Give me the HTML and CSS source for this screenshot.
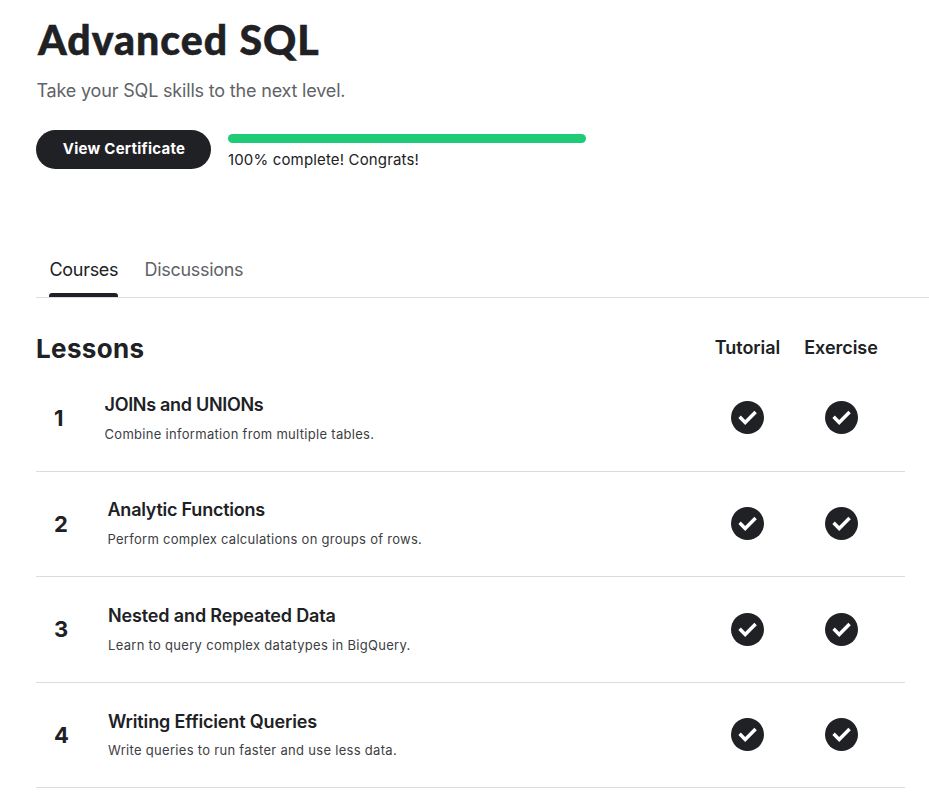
FILE: index.html
```html
<!DOCTYPE html>
<html lang="en">
<head>
<meta charset="utf-8">
<title>Advanced SQL</title>
<link rel="stylesheet" href="styles.css">
</head>
<body>
<svg class="defs" aria-hidden="true"><symbol id="check" viewBox="2 2 20 20"><circle cx="12" cy="12" r="10"/><path d="M7.200 11.600l3.400 3.400 6.300-6.300" fill="none" stroke="#fff" stroke-width="2.100"/></symbol></svg>
<header class="intro">
  <h1>Advanced SQL</h1>
  <p class="tagline">Take your SQL skills to the next level.</p>
  <div class="status">
    <button class="certificate" type="button">View Certificate</button>
    <div class="progress"><div class="bar"></div><p>100% complete! Congrats!</p></div>
  </div>
</header>
<nav class="tabs"><a class="tab active">Courses</a><a class="tab">Discussions</a></nav>
<main class="lessons">
  <div class="heading"><h2>Lessons</h2><span class="col">Tutorial</span><span class="col">Exercise</span></div>
  <div class="lesson first"><span class="number">1</span><div class="text"><h3>JOINs and UNIONs</h3><p>Combine information from multiple tables.</p></div><span class="mark"><svg><use href="#check"/></svg></span><span class="mark"><svg><use href="#check"/></svg></span></div>
  <div class="lesson second"><span class="number">2</span><div class="text"><h3>Analytic Functions</h3><p>Perform complex calculations on groups of rows.</p></div><span class="mark"><svg><use href="#check"/></svg></span><span class="mark"><svg><use href="#check"/></svg></span></div>
  <div class="lesson third"><span class="number">3</span><div class="text"><h3>Nested and Repeated Data</h3><p>Learn to query complex datatypes in BigQuery.</p></div><span class="mark"><svg><use href="#check"/></svg></span><span class="mark"><svg><use href="#check"/></svg></span></div>
  <div class="lesson fourth"><span class="number">4</span><div class="text"><h3>Writing Efficient Queries</h3><p>Write queries to run faster and use less data.</p></div><span class="mark"><svg><use href="#check"/></svg></span><span class="mark"><svg><use href="#check"/></svg></span></div>
</main>
</body>
</html>
```
FILE: styles.css
```css
* { box-sizing: border-box; }
body, h1, h2, h3, p { margin: 0; }
body { background: #fff; color: #202124; font-family: Inter, sans-serif; overflow: hidden; }
.defs { display: none; }
.intro { height: 247px; padding: 14px 0 0 36px; }
h1 { padding-left: 2px; font: 900 41px/51px Lato, sans-serif; letter-spacing: 1px; word-spacing: 0.5px; -webkit-text-stroke: 0.5px #202124; white-space: nowrap; }
.tagline { margin: 13px 0 0 0.5px; font-size: 18px; line-height: 26px; letter-spacing: -0.18px; color: #5f6368; white-space: nowrap; }
.status { display: flex; gap: 17px; margin-top: 26px; }
.certificate { width: 175px; height: 39px; padding: 0 0 2px 1px; border: 0; border-radius: 20px; background: #202124; color: #fff; font: 700 15px Inter, sans-serif; letter-spacing: 0.26px; }
.progress { padding-top: 4px; font-size: 15px; letter-spacing: 0.15px; }
.bar { width: 358px; height: 9px; border-radius: 5px; background: #20cb78; }
.progress p { margin-top: 7px; line-height: 20px; white-space: nowrap; }
.tabs { display: flex; gap: 26.5px; height: 51px; margin-left: 36px; padding-left: 13px; border-bottom: 1px solid #dadce0; }
.tab { padding-top: 11px; font-size: 18px; line-height: 24px; letter-spacing: -0.3px; color: #5f6368; }
.active { display: flex; flex-direction: column; justify-content: space-between; width: 69px; padding-left: 0.5px; color: #202124; }
.active::after { content: ""; height: 4px; margin-left: -0.5px; border-radius: 3px 3px 0 0; background: #202124; }
.lessons { width: 869px; margin-left: 36px; }
.heading, .lesson { display: grid; grid-template-columns: 1fr 94px 93px; }
.heading { height: 68px; padding: 33px 17.5px 0 0; }
h2 { font-size: 26px; line-height: 36px; letter-spacing: 0.35px; }
.col { font-size: 18px; line-height: 34px; font-weight: 600; letter-spacing: -0.05px; text-align: center; }
.lesson { grid-template-columns: 68px 1fr 93px 94px; height: 106px; padding-right: 17px; border-bottom: 1px solid #dadce0; }
.second, .fourth { height: 105px; }
.number { padding: 38px 0 0 18px; font-size: 22px; line-height: 28px; font-weight: 700; }
.text { padding: 26px 0 0 0.5px; white-space: nowrap; }
.second .text { padding: 25px 0 0 3.5px; }
.third .text, .fourth .text { padding-left: 4px; }
h3 { font-size: 18px; line-height: 26px; font-weight: 600; letter-spacing: -0.24px; }
.first h3 { letter-spacing: -0.3px; }
.third h3, .fourth h3 { letter-spacing: -0.14px; }
.text p { margin-top: 7px; font-size: 13px; line-height: 18px; letter-spacing: 0.3px; color: #3c4043; }
.second .text p { letter-spacing: 0.28px; }
.fourth .text p { margin-top: 6px; }
.mark { display: flex; justify-content: center; padding-top: 35px; }
.third .mark { padding-top: 36px; }
.mark svg { width: 33px; height: 33px; fill: #202124; }
```
